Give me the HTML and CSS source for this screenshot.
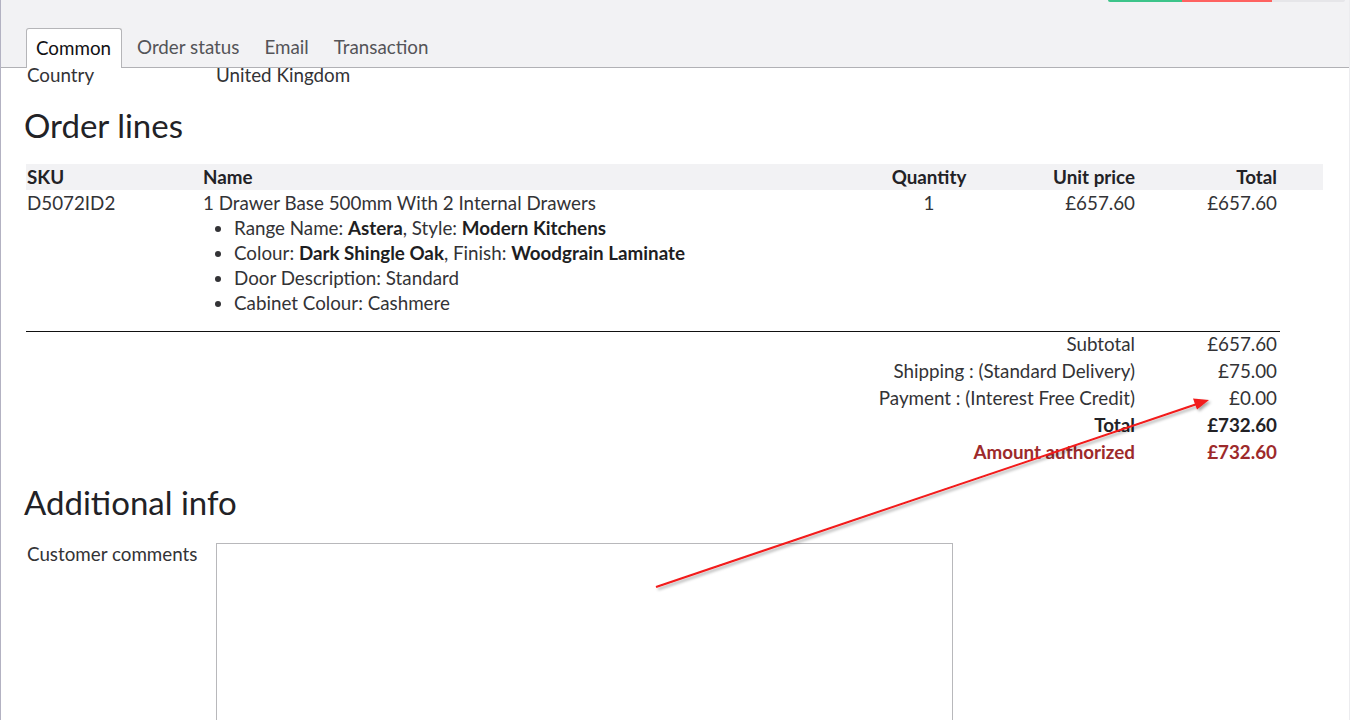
FILE: index.html
```html
<!DOCTYPE html>
<html>
<head>
<meta charset="utf-8">
<link rel="stylesheet" href="styles.css">
</head>
<body>
<div class="frame">
  <div class="progress"><span class="p-ok"></span><span class="p-bad"></span><span class="p-rest"></span></div>
  <div class="tabbar">
    <div class="tab active">Common</div>
    <div class="tab">Order status</div>
    <div class="tab">Email</div>
    <div class="tab">Transaction</div>
  </div>
  <div class="content">
    <div class="field top">
      <div class="label">Country</div>
      <div class="value">United Kingdom</div>
    </div>
    <h2 class="heading">Order lines</h2>
    <div class="lines">
      <div class="row head">
        <div class="c-sku">SKU</div>
        <div class="c-name">Name</div>
        <div class="c-qty">Quantity</div>
        <div class="c-unit">Unit price</div>
        <div class="c-total">Total</div>
        <div class="c-pad"></div>
      </div>
      <div class="row item">
        <div class="c-sku">D5072ID2</div>
        <div class="c-name">1 Drawer Base 500mm With 2 Internal Drawers
          <ul class="opts">
            <li>Range Name: <b>Astera</b>, Style: <b>Modern Kitchens</b></li>
            <li>Colour: <b>Dark Shingle Oak</b>, Finish: <b>Woodgrain Laminate</b></li>
            <li>Door Description: Standard</li>
            <li>Cabinet Colour: Cashmere</li>
          </ul>
        </div>
        <div class="c-qty">1</div>
        <div class="c-unit">£657.60</div>
        <div class="c-total">£657.60</div>
      </div>
    </div>
    <div class="summary">
      <div class="s-row"><div class="s-label">Subtotal</div><div class="s-val">£657.60</div></div>
      <div class="s-row"><div class="s-label">Shipping : (Standard Delivery)</div><div class="s-val">£75.00</div></div>
      <div class="s-row"><div class="s-label">Payment : (Interest Free Credit)</div><div class="s-val">£0.00</div></div>
      <div class="s-row strong"><div class="s-label">Total</div><div class="s-val">£732.60</div></div>
      <div class="s-row strong auth"><div class="s-label">Amount authorized</div><div class="s-val">£732.60</div></div>
    </div>
    <h2 class="heading second">Additional info</h2>
    <div class="field comments">
      <div class="label">Customer comments</div>
      <div class="textarea"></div>
    </div>
  </div>
  <svg class="arrow" width="1350" height="720" viewBox="0 0 1350 720">
    <defs>
      <filter id="sh" x="-10%" y="-10%" width="120%" height="120%">
        <feDropShadow dx="2" dy="2" stdDeviation="1.5" flood-color="#000" flood-opacity="0.35"/>
      </filter>
    </defs>
    <g filter="url(#sh)">
      <line x1="655" y1="587" x2="1196" y2="404" stroke="#f21a1a" stroke-width="2"/>
      <polygon points="1208,400 1192,398.5 1196,409.5" fill="#f21a1a"/>
    </g>
  </svg>
</div>
</body>
</html>
```

FILE: styles.css
```css
html, body {
  margin: 0;
  padding: 0;
  background: #ffffff;
}
body {
  font-family: Lato, "Open Sans", sans-serif;
  font-size: 18.8px;
  color: #333336;
}
.frame {
  position: relative;
  width: 1348px;
  height: 720px;
  overflow: hidden;
  border-left: 1px solid #b3b2c2;
  border-right: 1px solid #ececef;
}
.progress {
  position: absolute;
  top: 0;
  left: 1107px;
  width: 237px;
  height: 2px;
  display: flex;
  border-radius: 0 0 2px 2px;
  overflow: hidden;
}
.p-ok { width: 74px; background: #3dc48a; }
.p-bad { width: 90px; background: #fe6260; }
.p-rest { flex: 1; background: #e6e6e9; }
.tabbar {
  background: #f2f2f4;
  border-bottom: 1px solid #b1b1b5;
  box-sizing: border-box;
  height: 68px;
  display: flex;
  align-items: flex-end;
  padding-left: 25px;
}
.tab {
  height: 39px;
  line-height: 37px;
  padding: 0 10px;
  color: #545458;
  margin-right: 5px;
  box-sizing: border-box;
}
.tab.active {
  background: #fff;
  border: 1px solid #b5b5b8;
  border-bottom: none;
  border-radius: 3px 3px 0 0;
  color: #111114;
  margin-bottom: -1px;
  height: 40px;
  padding: 0 10px 0 9px;
  margin-right: 5px;
}
.content {
  position: relative;
  padding: 0 26px 0 25px;
}
.field {
  display: flex;
}
.label {
  box-sizing: border-box;
  width: 190px;
  padding-left: 1px;
  flex: none;
}
.field.top {
  line-height: 20px;
  margin-top: -3px;
}
.heading {
  font-weight: 400;
  font-size: 33px;
  margin: 22px 0 21px -2px;
  line-height: 36px;
  color: #222226;
}
.row {
  display: grid;
  grid-template-columns: 177px 668px 116px 151px 142px 45px;
  line-height: 25px;
}
.row > div {
  padding: 0 1px;
}
.row > .c-name {
  padding-left: 0;
}
.row.head {
  background: #f2f2f4;
  font-weight: 700;
  height: 26px;
  line-height: 26px;
  color: #222226;
}
.c-qty { text-align: center; }
.row > .c-unit, .row > .c-total {
  text-align: right;
  padding-right: 3px;
}
.row.item {
  padding-bottom: 16px;
  border-bottom: 1px solid #111;
  width: 1254px;
  grid-template-columns: 177px 668px 116px 151px 142px;
}
.opts {
  margin: 0;
  padding-left: 31px;
}
.opts b { color: #1e1e22; }
.summary {
  width: 1254px;
  margin-top: -2px;
}
.s-row {
  display: grid;
  grid-template-columns: 1fr 142px;
  line-height: 27px;
  text-align: right;
}
.s-row > div {
  padding-right: 3px;
}
.s-row.strong { font-weight: 700; color: #222226; }
.s-row.auth { color: #9d2a2b; }
.heading.second {
  margin: 19px 0 21px -2px;
}
.comments {
  line-height: 25px;
}
.textarea {
  width: 735px;
  height: 200px;
  border: 1px solid #b8b8bb;
  margin-top: 2px;
}
.arrow {
  position: absolute;
  left: 0;
  top: 0;
  pointer-events: none;
}
```
